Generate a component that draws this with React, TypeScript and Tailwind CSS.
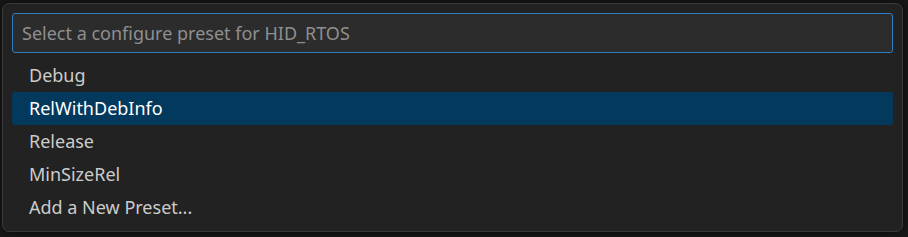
import React from "react";

const presets = ["Debug", "RelWithDebInfo", "Release", "MinSizeRel", "Add a New Preset..."];
const SELECTED = 1;

export default function App() {
  return (
    <div
      className="h-[237px] w-[908px] overflow-hidden bg-[#181818] pl-[2px] pt-[3px]"
      style={{ fontFamily: '"Noto Sans", "Open Sans", sans-serif' }}
    >
      <div className="flex h-[229px] w-[901px] flex-col rounded-[7px] border border-[#3a3a3a] bg-[#222222] px-[9px] pt-[9px] shadow-[0_0_8px_rgba(0,0,0,0.6)]">
        <div className="flex h-[40px] items-center rounded-[3px] border border-[#2f7dc2] bg-[#2c2c2c] px-[9px]">
          <span className="text-[18px] text-[#8f8f8f]">Select a configure preset for HID_RTOS</span>
        </div>
        <div className="mt-[6px] flex flex-col">
          {presets.map((p, i) => (
            <div
              key={p}
              className={
                i === SELECTED
                  ? "flex h-[33px] items-center rounded-[3px] bg-[#04395e] pl-[17px] text-[18px] text-white"
                  : "flex h-[33px] items-center pl-[17px] text-[18px] text-[#cccccc]"
              }
            >
              {p}
            </div>
          ))}
        </div>
      </div>
    </div>
  );
}
